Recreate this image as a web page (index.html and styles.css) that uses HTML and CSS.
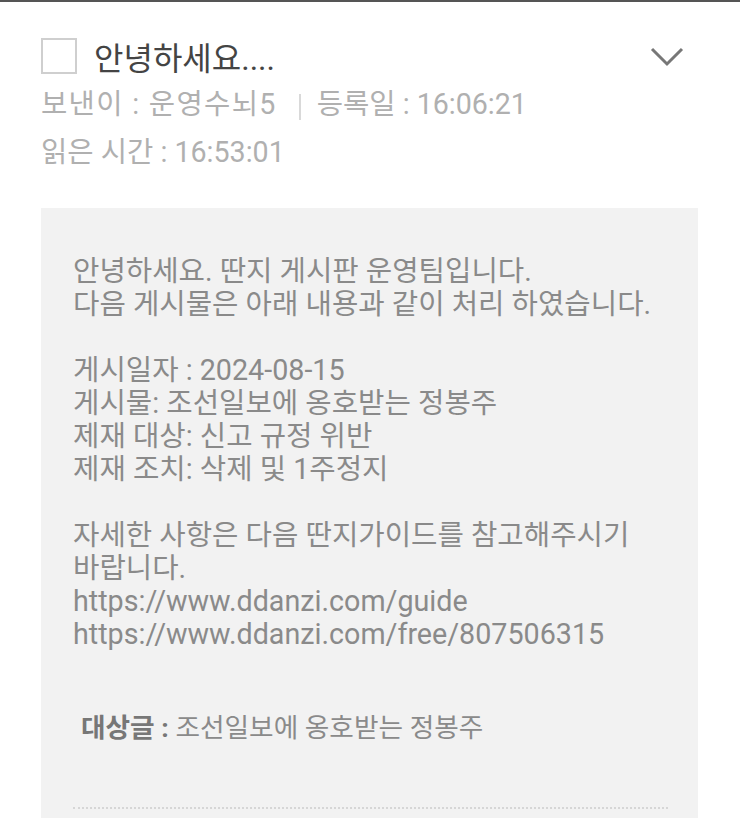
FILE: index.html
```html
<!DOCTYPE html>
<html lang="ko">
<head>
<meta charset="utf-8">
<link rel="stylesheet" href="styles.css">
</head>
<body>
<div class="page">
  <div class="head">
    <div class="title-row">
      <span class="check"></span>
      <span class="title">안녕하세요....</span>
      <svg class="chev" width="34" height="20" viewBox="0 0 34 20"><polyline points="2,2 17,17 32,2" fill="none" stroke="#777" stroke-width="3"/></svg>
    </div>
    <div class="meta"><span class="sender">보낸이 : 운영수뇌5</span><span class="sep"></span>등록일 : 16:06:21</div>
    <div class="meta">읽은 시간 : 16:53:01</div>
  </div>
  <div class="box">
    <div class="msg">안녕하세요. 딴지 게시판 운영팀입니다.<br>다음 게시물은 아래 내용과 같이 처리 하였습니다.<br><br>게시일자 : 2024-08-15<br>게시물: 조선일보에 옹호받는 정봉주<br>제재 대상: 신고 규정 위반<br>제재 조치: 삭제 및 1주정지<br><br>자세한 사항은 다음 딴지가이드를 참고해주시기<br>바랍니다.<br>https://www.ddanzi.com/guide<br>https://www.ddanzi.com/free/807506315</div>
    <div class="target"><b>대상글 :</b> 조선일보에 옹호받는 정봉주</div>
    <div class="dots"></div>
  </div>
</div>
</body>
</html>
```

FILE: styles.css
```css
html, body { margin: 0; padding: 0; background: #fff; }
body { font-family: Roboto, "Noto Sans CJK KR", sans-serif; }
.page { border-top: 2px solid #555; width: 740px; height: 816px; overflow: hidden; }
.head { padding: 30px 56px 0 41px; }
.title-row { display: flex; align-items: center; height: 48px; }
.check { width: 32px; height: 32px; border: 2px solid #cfcfcf; flex: none; }
.title { font-size: 32px; color: #444; margin-left: 17px; flex: 1; }
.chev { flex: none; margin-top: 2px; }
.meta { font-size: 28.6px; color: #b0b0b0; height: 48px; line-height: 48px; display: flex; align-items: center; }
.sender { letter-spacing: 1.3px; }
.sep { display: inline-block; width: 2px; height: 26px; background: #d9d9d9; margin: 6px 16px 0 22px; }
.box { margin: 32px 42px 0 41px; background: #f2f2f2; padding: 47px 30px 40px 32px; }
.msg { font-size: 28.7px; line-height: 33px; color: #8a8a8a; }
.target { font-size: 26.7px; line-height: 33px; color: #8a8a8a; margin: 61px 0 0 8px; }
.target b { color: #777; font-weight: 700; }
.dots { margin-top: 62px; border-top: 2px dotted #d6d6d6; }
```
